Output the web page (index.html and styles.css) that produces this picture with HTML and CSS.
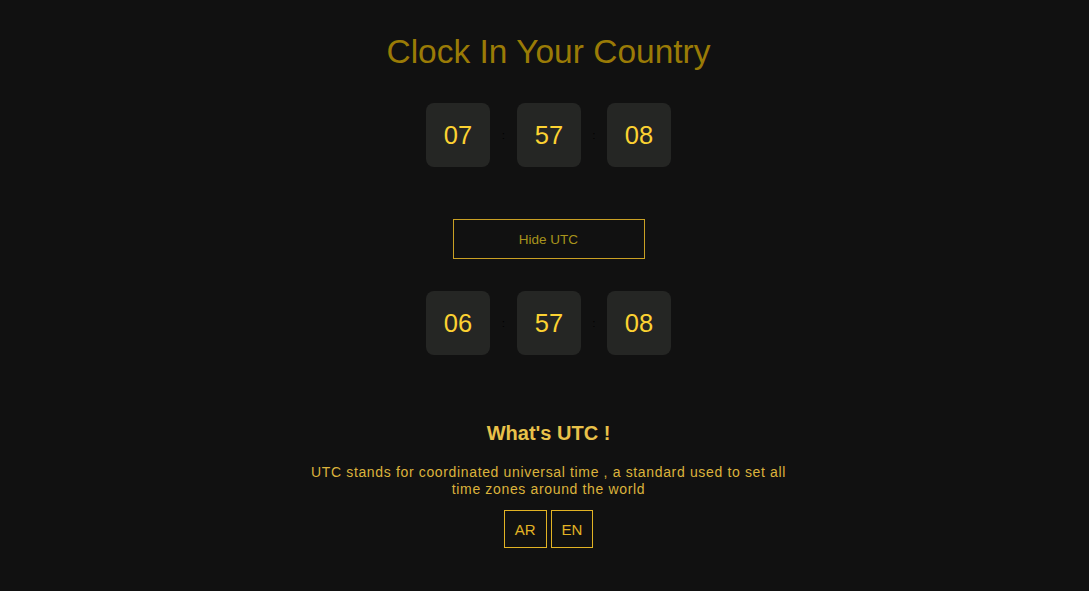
FILE: index.html
```html
<!DOCTYPE html>
<html lang="en">
<head>
<meta charset="utf-8">
<title>Clock In Your Country</title>
<link rel="stylesheet" href="styles.css">
</head>
<body>
<main class="page">
  <h1 class="title">Clock In Your Country</h1>
  <div class="clock">
    <div class="unit">07</div>
    <span class="sep">:</span>
    <div class="unit">57</div>
    <span class="sep">:</span>
    <div class="unit">08</div>
  </div>
  <button class="toggle" type="button">Hide UTC</button>
  <div class="clock clock-utc">
    <div class="unit">06</div>
    <span class="sep">:</span>
    <div class="unit">57</div>
    <span class="sep">:</span>
    <div class="unit">08</div>
  </div>
  <section class="about">
    <h2 class="about-title">What's UTC !</h2>
    <p class="about-text">UTC stands for coordinated universal time , a standard used to set all time zones around the world</p>
    <div class="langs">
      <button class="lang" type="button">AR</button>
      <button class="lang" type="button">EN</button>
    </div>
  </section>
</main>
</body>
</html>
```

FILE: styles.css
```css
html, body {
  margin: 0;
  padding: 0;
  background: #111111;
}
body {
  font-family: "Liberation Sans", Arial, sans-serif;
}
.page {
  display: flex;
  flex-direction: column;
  align-items: center;
  padding: 33px 0 0 8px;
}
.title {
  margin: 0;
  font-size: 33.5px;
  font-weight: normal;
  line-height: 38px;
  color: #9a7b06;
}
.clock {
  display: flex;
  align-items: center;
  margin-top: 32px;
}
.unit {
  width: 64px;
  height: 64px;
  border-radius: 8px;
  background: #252624;
  color: #fcd232;
  font-size: 25.5px;
  display: flex;
  align-items: center;
  justify-content: center;
}
.sep {
  width: 26px;
  text-align: center;
  font-size: 10px;
  color: #000;
}
.sep:first-of-type {
  width: 27px;
}
.toggle {
  margin-top: 52px;
  width: 192px;
  height: 40px;
  background: transparent;
  border: 1px solid #c9a024;
  color: #a8941c;
  font-family: "Liberation Sans", Arial, sans-serif;
  font-size: 13.5px;
  cursor: pointer;
}
.clock-utc {
  margin-top: 32px;
}
.about {
  display: flex;
  flex-direction: column;
  align-items: center;
  margin-top: 66px;
}
.about-title {
  margin: 0;
  font-size: 20px;
  line-height: 24px;
  font-weight: bold;
  color: #e8c14a;
}
.about-text {
  margin: 19px 0 0;
  max-width: 500px;
  text-align: center;
  font-size: 14px;
  line-height: 17px;
  letter-spacing: 0.65px;
  color: #dcb33c;
}
.langs {
  display: flex;
  gap: 4px;
  margin-top: 12px;
}
.lang {
  height: 38px;
  padding: 0 10px;
  background: transparent;
  border: 1px solid #e2b324;
  color: #e2b324;
  font-family: "Liberation Sans", Arial, sans-serif;
  font-size: 15px;
  cursor: pointer;
}
```
